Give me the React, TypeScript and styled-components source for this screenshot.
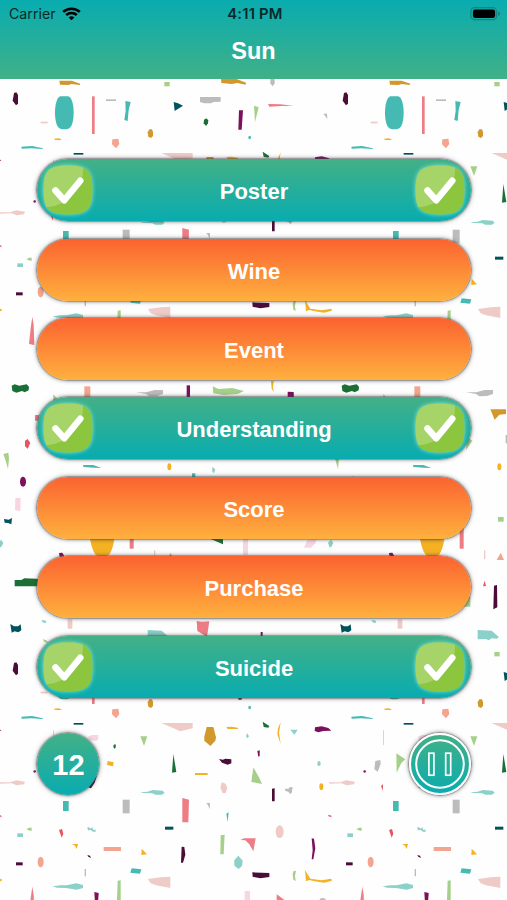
import React from "react";
import styled, { createGlobalStyle, css } from "styled-components";

const GlobalStyle = createGlobalStyle`
  * { box-sizing: border-box; }
  body { margin: 0; background: #fefefe; }
`;

const Screen = styled.main`
  position: relative;
  width: 507px;
  height: 900px;
  overflow: hidden;
  display: flex;
  flex-direction: column;
  font-family: "Liberation Sans", Arial, sans-serif;
  background: #fefefe;
`;

const Backdrop = styled.svg`
  position: absolute;
  inset: 0;
  width: 507px;
  height: 900px;
`;

const Header = styled.header`
  position: relative;
  height: 79px;
  flex: none;
  background: linear-gradient(#09acb0, #40b087);
`;

const StatusBar = styled.div`
  height: 27px;
  padding: 0 6px 0 9px;
  display: grid;
  grid-template-columns: 1fr auto 1fr;
  align-items: center;
  font-family: Inter, sans-serif;
  font-size: 14.2px;
  color: #07282b;
`;

const Carrier = styled.div`
  display: flex;
  align-items: center;
  gap: 6px;
`;

const Clock = styled.div`
  font-weight: 600;
  font-size: 14.8px;
  letter-spacing: 0.2px;
`;

const Battery = styled.svg`
  justify-self: end;
`;

const Title = styled.h1`
  margin: 9px 0 0;
  text-align: center;
  font-size: 23.5px;
  line-height: 30px;
  font-weight: 700;
  color: #fff;
`;

const WordList = styled.div`
  position: relative;
  display: flex;
  flex-direction: column;
  gap: 17.4px;
  padding: 80.2px 36px 0 37px;
`;

const teal = css`
  background: linear-gradient(#43b086, #08acb0);
`;

const rim = css`
  box-shadow: 0 0 1.5px 0.6px rgba(70, 70, 75, 0.75), 0 0 4px 1px rgba(60, 60, 60, 0.42);
`;

const WordButton = styled.button<{ $found: boolean }>`
  height: 62px;
  border: 0;
  border-radius: 31px;
  padding: 0 6px;
  display: flex;
  align-items: center;
  justify-content: space-between;
  background: linear-gradient(#fb6330, #ffb03e);
  ${(p) => p.$found && teal}
  ${rim}
  color: #fff;
  font: 700 22px/26px "Liberation Sans", Arial, sans-serif;
`;

const Label = styled.span`
  flex: 1;
  padding-top: 4px;
  text-align: center;
`;

const CheckBox = styled.svg`
  width: 50px;
  height: 50px;
  flex: none;
  overflow: visible;
  filter: drop-shadow(0 0 2px #7fe6e0);
`;

const Footer = styled.footer`
  position: relative;
  display: flex;
  justify-content: space-between;
  padding: 35.6px 36px 0 37px;
`;

const Counter = styled.div`
  ${teal}
  ${rim}
  width: 62px;
  height: 62px;
  border-radius: 50%;
  display: grid;
  place-items: center;
  padding: 2px 0 0 1px;
  color: #fff;
  font-size: 29px;
  line-height: 32px;
  font-weight: 700;
`;

const PauseButton = styled.button`
  ${teal}
  ${rim}
  width: 62px;
  height: 62px;
  padding: 0;
  border: 2px solid #fff;
  background-origin: border-box;
  border-radius: 50%;
`;

const c = {
  ochre: "#d2982c",
  yellow: "#f4b122",
  lime: "#a6d08a",
  gray: "#bcbcbe",
  maroon: "#4b0c38",
  purple: "#7c105d",
  teal: "#45bab3",
  aqua: "#8bd0c9",
  rose: "#ee7c85",
  red: "#e8545f",
  salmon: "#f3a58f",
  blush: "#efcbc8",
  pale: "#f7d5e2",
  pine: "#00535a",
  forest: "#1b6f36",
};

type Tone = keyof typeof c;
type Piece = [Tone, string];

const TILE_W = 990;
const TILE_H = 1710;

const box = (x1: number, y1: number, x2: number, y2: number) =>
  `M${x1} ${y1}H${x2}V${y2}H${x1}Z`;
const oval = (x1: number, y1: number, x2: number, y2: number) => {
  const rx = (x2 - x1) / 2;
  const ry = (y2 - y1) / 2;
  return `M${x1} ${y1 + ry}a${rx} ${ry} 0 1 1 ${rx * 2} 0a${rx} ${ry} 0 1 1 ${-rx * 2} 0Z`;
};

const confetti: Piece[] = [
  ["ochre", "M178 242L215 242L241 251L239 255L215 252L205 255L180 254Z"],
  ["lime", box(493, 246, 509, 259)],
  ["ochre", "M663 236L710 237L738 248L737 254L712 249L695 252L664 249Z"],
  ["gray", "M811 232H824V250L818 259L811 250Z"],
  ["maroon", "M42 279L49 277L54 285V311L48 316L38 302Z"],
  ["teal", "M181 289H205C216 293 221 316 221 338S216 383 205 386Q193 389 181 386C170 383 165 360 165 338S170 293 181 289Z"],
  ["rose", box(276, 289, 284, 402)],
  ["gray", box(318, 298, 348, 303)],
  ["teal", "M376 303L392 306L386 330L383 363L373 360L377 332Z"],
  ["pine", "M521 306L534 310L549 317L524 333Z"],
  ["gray", "M600 291H662V305L640 306L634 310H613L600 306Z"],
  ["forest", "M612 359L619 355L625 361L624 370L618 378L611 370Z"],
  ["purple", "M717 331H729L725 389H715Z"],
  ["lime", "M762 317L776 322L765 366Z"],
  ["rose", "M804 312L842 313L880 318L843 318L808 320Z"],
  ["gray", "M970 341H981L982 357L977 350Z"],
  ["blush", box(122, 365, 143, 370)],
  ["ochre", "M448 388H456L459 396V408L453 414L445 410L443 397Z"],
  ["teal", oval(745, 407, 753, 418)],
  ["yellow", "M162 416L176 415L184 418V420H165Z"],
  ["salmon", "M337 418L355 416L358 432L348 445L336 433Z"],
  ["teal", "M64 440L96 438L129 445L128 447L94 445L65 446Z"],
  ["pine", box(221, 459, 250, 464)],
  ["blush", "M484 459H578V475L541 484Z"],
  ["ochre", "M620 471H640L648 502L646 512L631 528L613 512V500Z"],
  ["yellow", "M679 471L694 470L714 473V477H683Z"],
  ["aqua", "M741 490L747 499L742 505L738 499Z"],
  ["lime", "M421 499H442L432 528Z"],
  ["forest", "M341 524L347 523V533L343 536L340 530Z"],
  ["pale", "M265 500L276 495H295V507L290 512L266 510Z"],
  ["blush", box(159, 481, 162, 525)],
  ["yellow", "M323 573L341 577L339 589L321 585Z"],
  ["forest", "M520 552L529 606L516 608Z"],
  ["maroon", "M657 567L669 569L676 566L694 568V580L683 584L666 578Z"],
  ["yellow", box(585, 609, 623, 615)],
  ["blush", "M665 637L677 641L682 654L677 669L668 670L661 653Z"],
  ["blush", "M-4 637L30 637L49 631L75 635L72 643L50 646L35 640L-1 641Z"],
  ["maroon", "M291 615L284 638L273 655L265 652Z"],
  ["purple", oval(100, 601, 108, 608)],
  ["aqua", "M421 667L443 665L458 660L488 662L494 668L486 674L466 674L457 670L430 669Z"],
  ["teal", box(189, 693, 206, 723)],
  ["gray", box(368, 689, 389, 730)],
  ["rose", "M547 684L567 689L565 757H547Z"],
  ["gray", "M619 699H630L629 718L624 706Z"],
  ["teal", "M679 731L686 727L683 756Z"],
  ["rose", "M-6 735L0 735L5 741H-1Z"],
  ["lime", "M79 778L87 773H95V782H90Z"],
  ["aqua", box(52, 790, 69, 801)],
  ["red", "M177 780L186 777L190 791L185 803L181 791Z"],
  ["aqua", "M262 774L264 770L272 776L277 771L279 779L287 779V785H279L272 780L264 781Z"],
  ["pine", box(495, 770, 520, 779)],
  ["yellow", "M216 822H234L230 837L225 827Z"],
  ["salmon", box(311, 831, 363, 843)],
  ["yellow", "M425 836L441 853L424 855Z"],
  ["maroon", "M545 830L553 831L556 854L549 878H543Z"],
  ["lime", "M662 796L674 794L671 853H661Z"],
  ["rose", "M721 810L732 805H767L760 844L748 823L736 811Z"],
  ["aqua", "M715 857L728 872L726 888L716 897L703 887V871Z"],
  ["maroon", "M262 855L270 857L273 864L265 860Z"],
  ["maroon", box(48, 877, 68, 886)],
  ["salmon", oval(113, 860, 131, 892)],
  ["gray", box(254, 897, 258, 919)],
  ["teal", "M395 895L424 898L420 911L391 908Z"],
  ["blush", "M444 927L482 922L511 920V954L468 946L452 940Z"],
  ["aqua", "M158 949L182 946H200L229 940L249 945V954L230 959L198 954L171 953Z"],
  ["lime", "M353 932L362 931V990H351Z"],
  ["yellow", "M-5 927L5 929V933H-3Z"],
  ["rose", "M97 950L101 974L103 1035L87 1032L92 985Z"],
  ["purple", "M283 966L296 969L294 1000H285Z"],
  ["pale", box(734, 963, 750, 1010)],
  ["forest", "M788 455L808 468L805 473L791 471Z"],
  ["yellow", "M842 457L837 488L842 522L832 493L834 475Z"],
  ["aqua", "M871 479H893L883 494Z"],
  ["purple", "M945 472L965 469L985 474L994 482L970 483L955 487L944 483Z"],
  ["purple", "M772 543L779 541V558L775 560Z"],
  ["lime", "M760 592L777 622L786 642L754 636Z"],
  ["aqua", oval(952, 573, 962, 588)],
  ["yellow", oval(958, 640, 970, 660)],
  ["gray", "M136 573L151 570L152 582L143 605L133 598Z"],
  ["lime", "M199 550L226 568L214 579L200 608Z"],
  ["red", "M153 648L159 643V662Z"],
  ["maroon", "M816 656L824 655V694H816Z"],
  ["gray", "M855 656L866 656L869 651L878 652L875 669L870 672L865 665L856 663Z"],
  ["red", "M984 734L994 737V742L986 739Z"],
  ["blush", oval(827, 766, 851, 804)],
  ["purple", "M935 805L942 806L946 835L940 868H935L938 841Z"],
  ["maroon", "M757 907L808 909V921L781 925L758 920Z"],
  ["lime", "M880 904L888 902L885 917L887 933L880 929L878 913Z"],
  ["yellow", "M915 900L931 926L964 931L995 926L993 933L972 938L945 934L927 930L918 934Z"],
  ["rose", "M830 973L855 991L830 995Z"],
  ["gray", oval(958, 984, 978, 1000)],
  ["forest", "M35 1157L44 1153L58 1157L80 1153L87 1160L86 1171L74 1177L66 1173L49 1178L37 1173Z"],
  ["salmon", box(253, 1159, 271, 1196)],
  ["gray", "M408 1177L438 1177L464 1170L489 1170V1182L471 1188L448 1189L438 1182Z"],
  ["purple", box(560, 1156, 570, 1197)],
  ["lime", "M638 1159L656 1167L697 1164L732 1173L713 1182L672 1185L640 1180Z"],
  ["lime", "M160 1182L172 1197L160 1204Z"],
  ["rose", box(105, 1245, 118, 1262)],
  ["red", "M75 1322L83 1317L91 1329L83 1346L75 1339Z"],
  ["lime", "M10 1362L25 1358L27 1375L24 1407L17 1382Z"],
  ["purple", "M863 1175L881 1176L882 1197H863Z"],
  ["yellow", "M813 1143H821L819 1162L822 1176L815 1166Z"],
  ["ochre", "M481 1228H528V1242L508 1244L494 1259Z"],
  ["gray", box(527, 1305, 533, 1330)],
  ["lime", "M412 1313L427 1322L408 1350Z"],
  ["teal", "M249 1395L280 1395L304 1404L280 1403L250 1401Z"],
  ["yellow", oval(502, 1390, 514, 1411)],
  ["aqua", "M637 1401L646 1408L642 1420L637 1415Z"],
  ["teal", box(576, 1420, 586, 1432)],
  ["purple", oval(60, 1430, 78, 1460)],
  ["pale", "M46 1494H62L61 1534L45 1530Z"],
  ["pine", "M12 1557L26 1559L36 1554L34 1573L24 1569L14 1568Z"],
  ["aqua", "M-6 1628L3 1619L10 1629L5 1639L-1 1643Z"],
  ["yellow", "M267 1594H346Q341 1648 327 1665Q306 1675 287 1665Q272 1645 267 1594Z"],
  ["rose", box(389, 1582, 401, 1646)],
  ["forest", "M625 1614H669V1633Z"],
  ["pale", box(729, 1610, 744, 1665)],
  ["purple", "M177 1659L187 1658L194 1670H179Z"],
  ["forest", "M44 30L64 30L73 25L110 26L140 35V49H44Z"],
  ["aqua", "M124 150L139 152L136 160L128 157Z"],
  ["blush", box(203, 148, 217, 176)],
  ["pine", "M31 162L42 169H54L62 163L64 181L55 187L44 184L35 188Z"],
  ["aqua", "M443 180L485 182L507 202L500 206L485 205L476 211L468 207L443 208Z"],
  ["rose", "M590 153L605 155L628 154L621 200L592 183Z"],
  ["lime", "M128 207L141 212L145 219L133 216Z"],
  ["lime", box(504, 1551, 521, 1565)],
  ["blush", box(462, 1651, 466, 1677)],
  ["salmon", "M512 1658L522 1680H500Z"],
  ["pale", "M922 1620L950 1618L946 1630L933 1643L912 1643Z"],
  ["red", "M464 32L468 48L459 49Z"],
  ["maroon", "M492 47L501 45L502 112L490 118Z"],
  ["lime", box(395, 80, 421, 110)],
  ["purple", box(782, 186, 788, 198)],
];

const offsets = [-1, 0, 1].flatMap((col) => [0, 1].map((row) => [col * TILE_W, row * TILE_H]));

function ConfettiBackdrop() {
  return (
    <Backdrop viewBox="0 0 1521 2700" aria-hidden>
      <defs>
        <g id="confetti">
          {confetti.map(([tone, d], i) => (
            <path key={i} d={d} fill={c[tone]} />
          ))}
        </g>
      </defs>
      {offsets.map(([x, y]) => (
        <use key={`${x}-${y}`} href="#confetti" x={x} y={y} />
      ))}
    </Backdrop>
  );
}

const squircle =
  "M25 0.5C35 0.5 41 2 44.5 5.5S49.5 15 49.5 25S48 41 44.5 44.5S35 49.5 25 49.5S9 48 5.5 44.5S0.5 35 0.5 25S2 9 5.5 5.5S15 0.5 25 0.5Z";

function Check() {
  return (
    <CheckBox viewBox="0 0 50 50">
      <path d={squircle} fill="#8cc63f" />
      <path
        d="M25 0.5C31.5 0.5 36.5 1.1 40 2.8C41 23 25 41 3.6 42.2C1.4 38.5 0.5 32.5 0.5 25C0.5 15 2 9 5.5 5.5S15 0.5 25 0.5Z"
        fill="#a6d468"
      />
      <path
        d="M12.5 25.5L21.3 35.3L37.3 15.7"
        fill="none"
        stroke="#fff"
        strokeWidth="6.5"
        strokeLinecap="round"
        strokeLinejoin="round"
      />
    </CheckBox>
  );
}

const words = [
  { text: "Poster", found: true },
  { text: "Wine", found: false },
  { text: "Event", found: false },
  { text: "Understanding", found: true },
  { text: "Score", found: false },
  { text: "Purchase", found: false },
  { text: "Suicide", found: true },
];

export default function App() {
  return (
    <Screen>
      <GlobalStyle />
      <ConfettiBackdrop />
      <Header>
        <StatusBar>
          <Carrier>
            Carrier
            <svg width="19" height="14" viewBox="0 0 19 14" fill="none" stroke="#000">
              <path d="M1.2 4.9C5.8 .6 13.2 .6 17.8 4.9" strokeWidth="2.6" />
              <path d="M4.2 8C7.2 5.2 11.8 5.2 14.8 8" strokeWidth="2.5" />
              <path d="M9.5 13.3L6.6 10.5Q9.5 8 12.4 10.5Z" fill="#000" stroke="none" />
            </svg>
          </Carrier>
          <Clock>4:11 PM</Clock>
          <Battery width="31" height="14" viewBox="0 0 31 14">
            <rect x="0.9" y="0.7" width="25.6" height="12" rx="3.8" fill="none" stroke="#158184" strokeWidth="1.2" />
            <rect x="2.9" y="2.4" width="22.2" height="8.6" rx="2.3" fill="#000" />
            <path d="M28 4.4Q30.2 5.1 30.2 6.7T28 9Z" fill="#158184" />
          </Battery>
        </StatusBar>
        <Title>Sun</Title>
      </Header>
      <WordList>
        {words.map(({ text, found }) => (
          <WordButton key={text} $found={found}>
            {found && <Check />}
            <Label>{text}</Label>
            {found && <Check />}
          </WordButton>
        ))}
      </WordList>
      <Footer>
        <Counter>12</Counter>
        <PauseButton aria-label="Pause">
          <svg width="58" height="58" viewBox="0 0 58 58" fill="none" stroke="#fff">
            <circle cx="29" cy="29" r="23.8" strokeWidth="2" />
            <rect x="17.9" y="18.2" width="5" height="22" strokeWidth="1.7" />
            <rect x="34.7" y="18.2" width="5" height="22" strokeWidth="1.7" />
          </svg>
        </PauseButton>
      </Footer>
    </Screen>
  );
}
